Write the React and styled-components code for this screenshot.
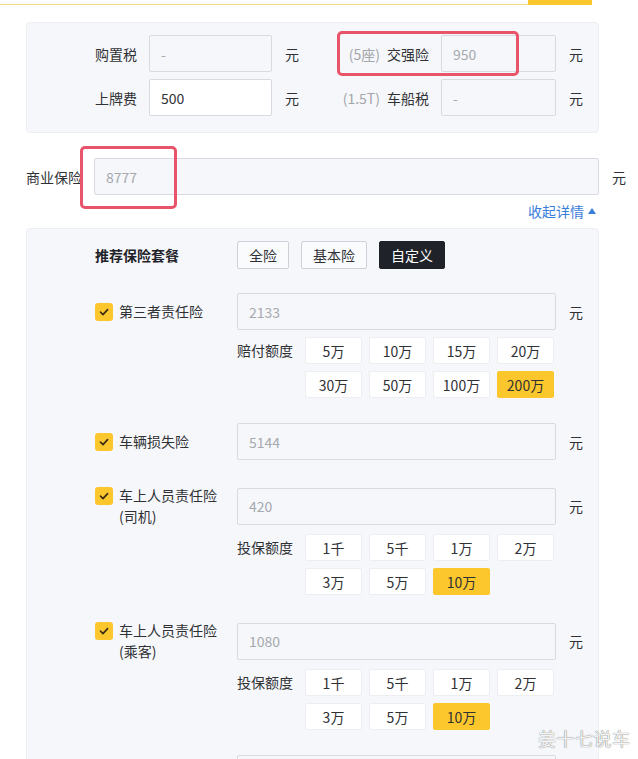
import React from 'react';
import styled, { createGlobalStyle } from 'styled-components';

const GlobalStyle = createGlobalStyle`
    html, body {
        margin: 0;
        padding: 0;
        background: #fff;
    }
    body {
        font-family: "Noto Sans CJK SC", "Noto Sans", sans-serif;
        font-size: 14px;
        color: #2f3135;
    }
    * {
        box-sizing: border-box;
    }
`;

const Page = styled.div`
    position: relative;
    width: 638px;
    min-height: 759px;
    overflow: hidden;
`;

const TopStrip = styled.div`
    width: 592px;
    height: 4.5px;
    border-bottom: 1.5px solid #f3dc80;
    display: flex;
    justify-content: flex-end;
`;

const TopTab = styled.div`
    width: 64px;
    height: 4.5px;
    background: #fcc72c;
`;

const Content = styled.div`
    padding-left: 26px;
    margin-top: 17.5px;
`;

const Panel = styled.div`
    width: 573px;
    background: #f6f7fa;
    border: 1px solid #eceef1;
    border-radius: 4px;
    padding: ${p => p.$pad};
`;

const FeeRows = styled.div`
    display: flex;
    flex-direction: column;
    gap: 7px;
`;

const FeeRow = styled.div`
    display: flex;
    align-items: center;
`;

const Field = styled.div`
    display: flex;
    align-items: center;
`;

const FieldLabel = styled.div`
    width: ${p => p.$w}px;
    margin-right: 12px;
    text-align: right;
    white-space: nowrap;
    line-height: 20px;
`;

const Hint = styled.span`
    color: #a3a6ab;
    margin-right: 7px;
`;

const Input = styled.input`
    width: ${p => p.$w}px;
    height: 37px;
    padding: 0 11px;
    border: 1px solid #d7dae0;
    border-radius: 2px;
    background: ${p => (p.$editable ? '#fff' : '#f5f7fa')};
    color: ${p => (p.$editable ? '#2f3135' : '#a6a9af')};
    font: inherit;
    font-size: 14px;
    outline: none;
`;

const Unit = styled.span`
    margin-left: 13px;
    width: 14px;
    line-height: 20px;
`;

const CommercialRow = styled.div`
    display: flex;
    align-items: center;
    margin-top: 25px;
`;

const CollapseRow = styled.div`
    width: 573px;
    margin-top: 6px;
    padding-right: 3px;
    display: flex;
    justify-content: flex-end;
    align-items: center;
    line-height: 20px;
    color: #3b7ddb;
`;

const Caret = styled.span`
    display: inline-block;
    margin-left: 4px;
    width: 0;
    height: 0;
    border-left: 4px solid transparent;
    border-right: 4px solid transparent;
    border-bottom: 6px solid #3b7ddb;
`;

const DetailPanel = styled(Panel)`
    margin-top: 7px;
    min-height: 560px;
`;

const HeaderRow = styled.div`
    display: grid;
    grid-template-columns: 142px auto;
    align-items: center;
`;

const Title = styled.div`
    font-weight: 700;
    color: #1f2329;
`;

const PlanButtons = styled.div`
    display: flex;
    gap: 12px;
`;

const PlanButton = styled.div`
    height: 28px;
    padding: 0 11px;
    display: flex;
    align-items: center;
    border: 1px solid ${p => (p.$active ? '#1f2329' : '#cdd0d6')};
    border-radius: 2px;
    background: ${p => (p.$active ? '#1f2329' : '#fafbfc')};
    color: ${p => (p.$active ? '#fff' : '#2f3135')};
`;

const Items = styled.div`
    display: flex;
    flex-direction: column;
    gap: 25px;
    margin-top: 24px;
`;

const Item = styled.div`
    display: grid;
    grid-template-columns: 142px 319px auto;
    align-items: center;
`;

const CheckLabel = styled.div`
    display: flex;
    align-items: flex-start;
    gap: 6px;
    line-height: 21px;
`;

const CheckBox = styled.span`
    flex-shrink: 0;
    width: 18px;
    height: 18px;
    margin-top: 1.5px;
    border-radius: 3px;
    background: #fcc72c;
    display: flex;
    align-items: center;
    justify-content: center;
`;

const LabelText = styled.div`
    color: #2f3135;
`;

const OptionArea = styled.div`
    grid-column: 2 / 4;
    display: flex;
    align-items: flex-start;
    margin-top: 7px;
`;

const OptionLabel = styled.div`
    width: 56px;
    margin-right: 12px;
    line-height: 27px;
    white-space: nowrap;
`;

const OptionGrid = styled.div`
    display: grid;
    grid-template-columns: repeat(4, 57px);
    grid-auto-rows: 27px;
    gap: 7px;
`;

const Option = styled.div`
    display: flex;
    align-items: center;
    justify-content: center;
    border: 1px solid ${p => (p.$selected ? '#fcc72c' : '#eceef1')};
    border-radius: 2px;
    background: ${p => (p.$selected ? '#fcc72c' : '#fff')};
    color: #2f3135;
`;

const Highlight = styled.div`
    position: absolute;
    left: ${p => p.$x}px;
    top: ${p => p.$y}px;
    width: ${p => p.$w}px;
    height: ${p => p.$h}px;
    border: 3px solid #e8546a;
    border-radius: 5px;
    pointer-events: none;
`;

const Watermark = styled.div`
    position: absolute;
    left: 538px;
    top: 725px;
    font-size: 18px;
    letter-spacing: 0.5px;
    color: #f4f4f4;
    text-shadow: 0 0 1px rgba(0, 0, 0, 0.5), 0 0 1px rgba(0, 0, 0, 0.3);
`;

const Check = () => (
    <svg width="12" height="12" viewBox="0 0 12 12">
        <path d="M2.5 6.2 L5 8.6 L9.6 3.6" fill="none" stroke="#3b2f17" strokeWidth="1.7" strokeLinecap="round" strokeLinejoin="round" />
    </svg>
);

const items = [
    { name: '第三者责任险', value: '2133', optLabel: '赔付额度', options: ['5万', '10万', '15万', '20万', '30万', '50万', '100万', '200万'], selected: '200万' },
    { name: '车辆损失险', value: '5144' },
    { name: '车上人员责任险', sub: '(司机)', value: '420', optLabel: '投保额度', options: ['1千', '5千', '1万', '2万', '3万', '5万', '10万'], selected: '10万' },
    { name: '车上人员责任险', sub: '(乘客)', value: '1080', optLabel: '投保额度', options: ['1千', '5千', '1万', '2万', '3万', '5万', '10万'], selected: '10万' },
];

const App = () => {
    return (
        <Page>
            <GlobalStyle />
            <TopStrip>
                <TopTab />
            </TopStrip>
            <Content>
                <Panel $pad="12px 0 16px 0">
                    <FeeRows>
                        <FeeRow>
                            <Field>
                                <FieldLabel $w={110}>购置税</FieldLabel>
                                <Input $w={123} value="-" readOnly />
                                <Unit>元</Unit>
                            </Field>
                            <Field>
                                <FieldLabel $w={130}><Hint>(5座)</Hint>交强险</FieldLabel>
                                <Input $w={115} value="950" readOnly />
                                <Unit>元</Unit>
                            </Field>
                        </FeeRow>
                        <FeeRow>
                            <Field>
                                <FieldLabel $w={110}>上牌费</FieldLabel>
                                <Input $w={123} $editable value="500" readOnly />
                                <Unit>元</Unit>
                            </Field>
                            <Field>
                                <FieldLabel $w={130}><Hint>(1.5T)</Hint>车船税</FieldLabel>
                                <Input $w={115} value="-" readOnly />
                                <Unit>元</Unit>
                            </Field>
                        </FeeRow>
                    </FeeRows>
                </Panel>

                <CommercialRow>
                    <FieldLabel $w={56}>商业保险</FieldLabel>
                    <Input $w={505} value="8777" readOnly />
                    <Unit>元</Unit>
                </CommercialRow>

                <CollapseRow>
                    收起详情<Caret />
                </CollapseRow>

                <DetailPanel $pad="12px 0 0 68px">
                    <HeaderRow>
                        <Title>推荐保险套餐</Title>
                        <PlanButtons>
                            <PlanButton>全险</PlanButton>
                            <PlanButton>基本险</PlanButton>
                            <PlanButton $active>自定义</PlanButton>
                        </PlanButtons>
                    </HeaderRow>
                    <Items>
                        {items.map((it, i) => (
                            <Item key={i}>
                                <CheckLabel>
                                    <CheckBox><Check /></CheckBox>
                                    <LabelText>
                                        {it.name}
                                        {it.sub && <div>{it.sub}</div>}
                                    </LabelText>
                                </CheckLabel>
                                <Input $w={319} value={it.value} readOnly />
                                <Unit>元</Unit>
                                {it.options && (
                                    <OptionArea>
                                        <OptionLabel>{it.optLabel}</OptionLabel>
                                        <OptionGrid>
                                            {it.options.map(o => (
                                                <Option key={o} $selected={o === it.selected}>{o}</Option>
                                            ))}
                                        </OptionGrid>
                                    </OptionArea>
                                )}
                            </Item>
                        ))}
                        {/* next row starts just below the fold */}
                        <Item>
                            <span />
                            <Input $w={319} value="" readOnly />
                        </Item>
                    </Items>
                </DetailPanel>
            </Content>

            <Highlight $x={337} $y={31} $w={182} $h={45} />
            <Highlight $x={80} $y={146} $w={97} $h={63} />
            <Watermark>姜十七说车</Watermark>
        </Page>
    );
};

export default App;
